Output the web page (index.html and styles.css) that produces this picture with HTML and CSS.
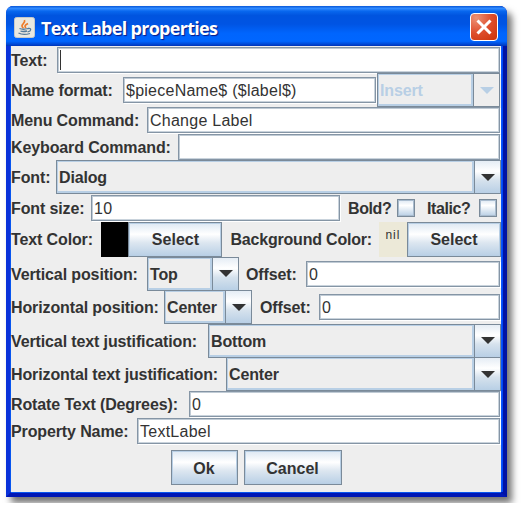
FILE: index.html
```html
<!DOCTYPE html>
<html lang="en">
<head>
<meta charset="utf-8">
<title>Text Label properties</title>
<link rel="stylesheet" href="styles.css">
</head>
<body>
<main class="window">
  <header class="titlebar">
    <svg class="java" viewBox="0 0 21 21" width="21" height="21">
      <rect x=".5" y=".5" width="20" height="20" rx="2" fill="#e9e8e0" stroke="#c6c9c9"/>
      <path d="M9.500 11C5 8 12 6.500 10.500 3M12 11C10 9 11 8 14 6.500" fill="none" stroke="#ed7a27" stroke-width="1.700"/>
      <path d="M5.500 11.500Q9 13 14 11.500M6.500 14Q9 15 13 14M14 11.500Q18 11 16 14L13.500 15M4.500 16Q9 18.500 16 16.500" fill="none" stroke="#557a99" stroke-width="1.300"/>
    </svg>
    <h1>Text Label properties</h1>
    <button class="close" aria-label="Close"><svg viewBox="0 0 28 28" width="28" height="28"><path d="M7.500 7.500L20.500 20.500M20.500 7.500L7.500 20.500" stroke="#fff" stroke-width="3"/></svg></button>
  </header>
  <form class="content">
    <div class="row r-text"><label>Text:</label><div class="field"><i class="caret"></i></div></div>
    <div class="row r-name"><label>Name format:</label><div class="field">$pieceName$ ($label$)</div><div class="combo disabled"><span>Insert</span><b class="arrow"></b></div></div>
    <div class="row r-menu"><label>Menu Command:</label><div class="field">Change Label</div></div>
    <div class="row r-key"><label>Keyboard Command:</label><div class="field"></div></div>
    <div class="row r-font"><label>Font:</label><div class="combo"><span>Dialog</span><b class="arrow"></b></div></div>
    <div class="row r-size"><label>Font size:</label><div class="field">10</div><label class="bold">Bold?</label><i class="check"></i><label class="italic">Italic?</label><i class="check"></i></div>
    <div class="row r-color"><label>Text Color:</label><i class="swatch black"></i><button type="button">Select</button><label class="bg">Background Color:</label><i class="swatch nil">nil</i><button type="button">Select</button></div>
    <div class="row r-vpos"><label>Vertical position:</label><div class="combo"><span>Top</span><b class="arrow"></b></div><label class="offset">Offset:</label><div class="field">0</div></div>
    <div class="row r-hpos"><label>Horizontal position:</label><div class="combo"><span>Center</span><b class="arrow"></b></div><label class="offset">Offset:</label><div class="field">0</div></div>
    <div class="row r-vjust"><label>Vertical text justification:</label><div class="combo"><span>Bottom</span><b class="arrow"></b></div></div>
    <div class="row r-hjust"><label>Horizontal text justification:</label><div class="combo"><span>Center</span><b class="arrow"></b></div></div>
    <div class="row r-rotate"><label>Rotate Text (Degrees):</label><div class="field">0</div></div>
    <div class="row r-prop"><label>Property Name:</label><div class="field">TextLabel</div></div>
    <div class="actions"><button type="button" class="ok">Ok</button><button type="button" class="cancel">Cancel</button></div>
  </form>
</main>
</body>
</html>
```
FILE: styles.css
```css
* { box-sizing: border-box; }
body { margin: 0; padding: 6px; background: #fff; font: 16px "Liberation Sans", sans-serif; color: #333; overflow: hidden; }
.window { width: 501px; height: 491px; border: solid; border-width: 0 6px 5px 5px; border-color: #0029cf #0012a5 #0017b5 #0831d9; border-radius: 7px 7px 0 0; background: #0831d9; box-shadow: 5px 6px 7px rgba(0,0,0,.55); }
.titlebar { height: 40px; margin: 0 -6px 0 -5px; padding: 2px 9px 0 8px; display: flex; align-items: center; border-radius: 7px 7px 0 0; background: linear-gradient(#0757d8 0, #318bff 6%, #0867ee 13%, #0054df 24%, #0054e3 45%, #0065fd 68%, #0066ff 88%, #0046d2 96%, #0034b8); }
h1 { flex: 1; margin: 2px 0 0 6px; color: #fff; font: bold 18px "Open Sans", sans-serif; letter-spacing: -.7px; text-shadow: 1px 1px 1px #0a1883; white-space: nowrap; }
.close { width: 28px; height: 28px; padding: 0; border: 1px solid #fff; border-radius: 4px; background: radial-gradient(circle at 20% 15%, #ee9275, #de4e2d 50%, #cb3107); overflow: hidden; }
.close svg { display: block; margin: -1px; }
.content { height: 446px; margin: 0; background: #eee; box-shadow: -1px 0 #0855ef, 1px 0 #0855ff, 2px 0 #0048f4, 0 1px #0855ef; }
.row { display: flex; align-items: center; white-space: nowrap; }
label { flex: none; font-weight: bold; line-height: 20px; padding-top: 2px; letter-spacing: -.12px; }
.field { flex: 1; height: 26px; padding: 0 2px; border: 1px solid #8595a5; box-shadow: inset 1px 1px #c0cbd5, inset -1px -1px #c9d3dc, 1px 1px #fff; background: #fff; line-height: 26px; letter-spacing: .25px; margin-right: 1px; }
.caret { display: block; width: 1px; height: 20px; margin: 2px 0 0 0; background: #333; }
.combo { height: 34px; display: flex; flex: 1; border: 1px solid #7a8a99; background: #eee; font-weight: bold; letter-spacing: -.15px; }
.combo span { flex: 1; padding: 0 1px; border: solid #b8cfe5; border-width: 1px 2px 2px 1px; line-height: 31px; height: 32px; }
.arrow { flex: none; width: 26px; border-left: 1px solid #7a8a99; display: grid; place-items: center; background: linear-gradient(#e5edf5, #fff 32%, #d6e2ed 60%, #b8cfe5); }
.arrow::after { content: ""; border: 7px solid transparent; border-top-color: #333; border-bottom: 0; }
.disabled { color: #b8cfe5; box-shadow: 0 1px #8c9cab; margin-right: 1px; }
.disabled .arrow { background: #eee; }
.disabled .arrow::after { border-top-color: #b8cfe5; }
button { font: bold 16px "Liberation Sans", sans-serif; color: #333; }
.row button, .actions button { height: 35px; padding: 2px 0 0; border: 1px solid #7a8a99; box-shadow: inset 0 0 0 1px #b8cfe5; background: linear-gradient(#dde8f3, #fff 34%, #dce6f0 60%, #b8cfe5); letter-spacing: 0; }
.check { width: 18px; height: 18px; border: 1px solid #7a8a99; box-shadow: inset 0 0 0 1px #a9bccf; background: linear-gradient(#dde8f3, #fff 34%, #b8cfe5); }
.r-text { height: 27px; } .r-text label { width: 46px; }
.r-name { height: 34px; } .r-name label { width: 112px; } .r-name .field { flex: 0 0 253px; margin-right: 0; } .r-name .combo { margin-left: 1px; }
.r-menu { height: 26px; } .r-menu label { width: 136px; }
.r-key { height: 27px; } .r-key label { width: 167px; }
.r-font { height: 34px; } .r-font label { width: 45px; }
.r-size { height: 27px; } .r-size label { width: 80px; } .r-size .field { flex: 0 0 249px; margin-right: 0; } .r-size .bold { width: 57px; padding-left: 8px; } .r-size .italic { width: 64px; padding-left: 12px; }
.r-size .bold, .r-size .italic { letter-spacing: -.4px; }
.r-color { height: 36px; } .r-color label { width: 90px; } .r-color button { flex: 0 0 94px; } .r-color .bg { width: 157px; padding-left: 8px; letter-spacing: -.2px; }
.swatch { width: 28px; height: 35px; font-style: normal; }
.black { background: #000; }
.nil { background: #ece9d8; font-size: 12px; letter-spacing: 1px; padding: 6px 0 0 6px; line-height: 14px; }
.r-vpos { height: 33px; } .r-vpos label { width: 136px; } .r-vpos .combo { flex: 0 0 92px; } .r-vpos .offset { width: 67px; padding-left: 7px; }
.r-hpos { height: 34px; } .r-hpos label { width: 153px; } .r-hpos .combo { flex: 0 0 88px; } .r-hpos .offset { width: 67px; padding-left: 8px; }
.r-vjust { height: 33px; } .r-vjust label { width: 197px; }
.r-hjust { height: 34px; } .r-hjust label { width: 215px; }
.r-rotate { height: 26px; } .r-rotate label { width: 178px; }
.r-prop { height: 27px; } .r-prop label { width: 126px; }
.actions { display: flex; justify-content: center; gap: 6px; padding-top: 6px; }
.ok { width: 67px; } .cancel { width: 98px; }
```
